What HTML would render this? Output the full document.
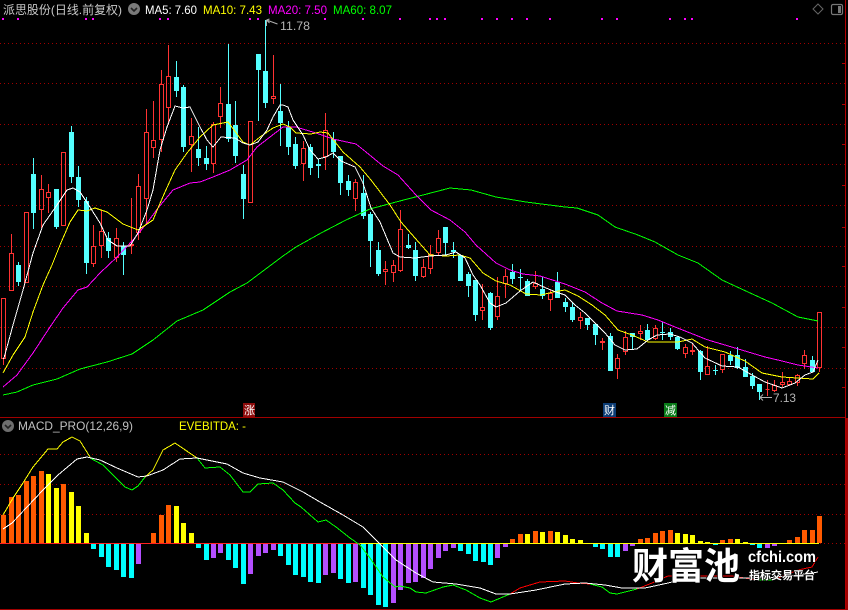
<!DOCTYPE html>
<html><head><meta charset="utf-8"><style>
html,body{margin:0;padding:0;background:#000;width:848px;height:610px;overflow:hidden}
svg{display:block}
text{font-family:"Liberation Sans",sans-serif;font-size:12px}
.cn{font-family:"Liberation Sans","WenQuanYi Zen Hei","Noto Sans CJK SC",sans-serif}
</style></head><body>
<svg width="848" height="610" viewBox="0 0 848 610" xmlns="http://www.w3.org/2000/svg">
<g shape-rendering="crispEdges">
<!-- grid -->
<g stroke="#a00000" stroke-width="1" stroke-dasharray="1 3" fill="none">
<path d="M0 43.5H845M0 83.5H845M0 124.5H845M0 164.5H845M0 205.5H845M0 246.5H845M0 286.5H845M0 327.5H845M0 368.5H845M0 454.5H845M0 484.5H845M0 514.5H845"/>
<path d="M820 543.5H845"/>
</g>
<path d="M0 417.5H846M0 609.5H848" stroke="#a00000" fill="none"/>
<path d="M845.5 0V610" stroke="#b00000" fill="none"/>
<path d="M846 418h2v192h-2z" fill="#a00000"/>
<path d="M842 63.5h3M842 104.5h3M842 144.5h3M842 185.5h3M842 227.5h3M842 266.5h3M842 307.5h3M842 347.5h3M842 387.5h3" stroke="#b00000" fill="none"/>
<!-- magenta dots -->
<path fill="#f0f" d="M2 18h2v2h-2zM17 18h2v2h-2zM85 18h2v2h-2zM92 18h2v2h-2zM159 18h2v2h-2zM167 18h2v2h-2zM249 18h2v2h-2zM257 18h2v2h-2zM324 18h2v2h-2zM362 18h2v2h-2zM399 18h2v2h-2zM429 18h2v2h-2zM436 18h2v2h-2zM444 18h2v2h-2zM481 18h2v2h-2zM496 18h2v2h-2zM511 18h2v2h-2zM526 18h2v2h-2zM549 18h2v2h-2zM601 18h2v2h-2zM616 18h2v2h-2zM669 18h2v2h-2zM684 18h2v2h-2zM691 18h2v2h-2zM796 18h2v2h-2z"/>
<!-- cyan candles -->
<path fill="#54ffff" d="M16 265h5v17h-5zM18 262h1v24h-1zM31 174h5v39h-5zM33 158h1v71h-1zM54 189h5v38h-5zM56 189h1v40h-1zM69 132h5v45h-5zM71 126h1v57h-1zM76 177h5v23h-5zM78 166h1v41h-1zM84 201h5v62h-5zM86 197h1v77h-1zM106 238h5v13h-5zM108 232h1v26h-1zM121 246h5v9h-5zM123 242h1v33h-1zM174 77h5v14h-5zM176 61h1v36h-1zM181 87h5v60h-5zM183 85h1v67h-1zM196 149h5v9h-5zM198 127h1v39h-1zM204 158h5v6h-5zM206 146h1v24h-1zM226 104h5v35h-5zM228 44h1v98h-1zM233 125h5v31h-5zM235 101h1v62h-1zM241 174h5v25h-5zM243 165h1v54h-1zM256 54h5v16h-5zM258 54h1v67h-1zM263 71h5v32h-5zM265 20h1v88h-1zM278 111h5v12h-5zM280 84h1v62h-1zM286 127h5v20h-5zM288 121h1v34h-1zM293 144h5v22h-5zM295 137h1v32h-1zM308 147h5v21h-5zM310 144h1v31h-1zM316 164h5v2h-5zM318 159h1v19h-1zM331 139h5v13h-5zM333 132h1v26h-1zM338 156h5v27h-5zM340 156h1v39h-1zM346 181h5v9h-5zM348 175h1v21h-1zM361 193h5v23h-5zM363 175h1v44h-1zM368 214h5v27h-5zM370 212h1v55h-1zM376 250h5v24h-5zM378 242h1v34h-1zM406 245h5v3h-5zM408 234h1v15h-1zM413 250h5v26h-5zM415 242h1v39h-1zM443 227h5v16h-5zM445 227h1v29h-1zM451 250h5v2h-5zM453 242h1v16h-1zM458 255h5v26h-5zM466 274h5v12h-5zM468 272h1v25h-1zM473 280h5v35h-5zM475 280h1v41h-1zM488 293h5v35h-5zM490 292h1v38h-1zM510 272h5v7h-5zM512 264h1v20h-1zM518 277h5v1h-5zM520 269h1v21h-1zM525 281h5v15h-5zM527 279h1v17h-1zM540 289h5v7h-5zM542 277h1v22h-1zM555 282h5v16h-5zM557 272h1v26h-1zM563 302h5v5h-5zM565 298h1v14h-1zM570 307h5v13h-5zM572 303h1v19h-1zM585 318h5v7h-5zM587 318h1v12h-1zM593 324h5v11h-5zM595 324h1v21h-1zM608 336h5v35h-5zM610 333h1v38h-1zM630 333h5v4h-5zM632 333h1v17h-1zM645 330h5v10h-5zM647 324h1v16h-1zM660 332h5v1h-5zM662 322h1v18h-1zM668 332h5v5h-5zM670 328h1v12h-1zM675 337h5v12h-5zM677 336h1v14h-1zM698 351h5v21h-5zM700 350h1v30h-1zM713 370h5v1h-5zM715 365h1v10h-1zM728 355h5v6h-5zM730 351h1v14h-1zM735 355h5v13h-5zM737 347h1v22h-1zM743 367h5v10h-5zM745 359h1v18h-1zM750 376h5v10h-5zM752 373h1v16h-1zM757 384h5v8h-5zM759 384h1v16h-1zM810 360h5v12h-5zM812 356h1v16h-1z"/>
<!-- red candles -->
<path fill="none" stroke="#ff3232" d="M1.5 298.5h4v60h-4zM3.5 359v6M9.5 253.5h4v37h-4zM11.5 234v19M24.5 212.5h4v70h-4zM39.5 189.5h4v20h-4zM41.5 175v14M41.5 210v18M46.5 192.5h4v5h-4zM48.5 184v8M48.5 198v15M61.5 152.5h4v73h-4zM91.5 246.5h4v17h-4zM93.5 225v21M93.5 264v3M99.5 231.5h4v14h-4zM101.5 210v21M101.5 246v12M114.5 238.5h4v19h-4zM116.5 228v10M116.5 258v4M129.5 244.5h4v1h-4zM131.5 198v46M131.5 246v8M136.5 186.5h4v46h-4zM138.5 174v12M138.5 233v7M144.5 132.5h4v66h-4zM146.5 109v23M146.5 199v26M151.5 140.5h4v7h-4zM153.5 101v39M153.5 148v10M159.5 84.5h4v55h-4zM161.5 70v14M161.5 140v12M166.5 76.5h4v31h-4zM168.5 45v31M168.5 108v17M189.5 136.5h4v8h-4zM191.5 118v18M191.5 145v27M211.5 124.5h4v39h-4zM213.5 122v2M213.5 164v9M218.5 103.5h4v13h-4zM220.5 87v16M220.5 117v11M248.5 121.5h4v81h-4zM271.5 96.5h4v2h-4zM273.5 55v41M273.5 99v5M301.5 148.5h4v15h-4zM303.5 141v7M303.5 164v17M323.5 130.5h4v26h-4zM325.5 113v17M325.5 157v13M353.5 182.5h4v16h-4zM355.5 179v3M355.5 199v12M383.5 269.5h4v2h-4zM385.5 261v8M385.5 272v13M391.5 265.5h4v7h-4zM393.5 260v5M393.5 273v9M398.5 229.5h4v41h-4zM400.5 210v19M400.5 271v1M421.5 267.5h4v9h-4zM423.5 259v8M423.5 277v1M428.5 254.5h4v14h-4zM430.5 245v9M430.5 269v5M436.5 238.5h4v14h-4zM438.5 230v8M438.5 253v2M480.5 307.5h4v3h-4zM482.5 284v23M482.5 311v9M495.5 296.5h4v20h-4zM497.5 277v19M497.5 317v3M503.5 276.5h4v7h-4zM505.5 269v7M505.5 284v14M533.5 283.5h4v3h-4zM535.5 271v12M535.5 287v2M548.5 293.5h4v6h-4zM550.5 290v3M550.5 300v11M578.5 317.5h4v3h-4zM580.5 312v5M580.5 321v8M600.5 341.5h4v1h-4zM602.5 338v3M602.5 343v7M615.5 358.5h4v10h-4zM617.5 354v4M617.5 369v10M623.5 337.5h4v14h-4zM625.5 331v6M625.5 352v3M638.5 331.5h4v2h-4zM640.5 325v6M640.5 334v6M653.5 328.5h4v10h-4zM655.5 325v3M655.5 339v1M683.5 347.5h4v6h-4zM685.5 344v3M685.5 354v4M690.5 350.5h4v1h-4zM692.5 343v7M692.5 352v3M705.5 366.5h4v8h-4zM707.5 346v20M720.5 354.5h4v15h-4zM722.5 370v3M765.5 389.5h4v0h-4zM767.5 380v16M772.5 385.5h4v5h-4zM774.5 380v5M774.5 391v1M780.5 382.5h4v2h-4zM782.5 372v10M782.5 385v2M787.5 381.5h4v3h-4zM789.5 378v3M789.5 385v1M795.5 375.5h4v7h-4zM797.5 374v1M797.5 383v3M802.5 355.5h4v8h-4zM804.5 350v5M804.5 364v5M817.5 312.5h4v55h-4zM819.5 368v4"/>
<!-- MAs -->
<g fill="none" stroke-width="1">
<polyline stroke="#00ff00" points="3,395 17,392 33,385 57,379 80,369 107,362 132,354 153,340 177,321 203,310 230,292 247,283 283,256 296,247 321,233 346,220 370,209 396,202 423,195 450,188 471,190 496,197 526,202 565,207 577,208 598,215 615,227 638,235 655,242 678,255 698,263 722,280 748,292 772,303 798,317 818,321"/>
<polyline stroke="#ff00ff" points="3,387 17,375 33,353 50,327 63,308 78,290 87,287 100,273 117,257 133,240 147,223 158,208 173,190 190,183 200,182 213,177 230,170 247,160 257,147 270,137 283,127 296,127 316,133 333,139 356,144 366,152 383,166 398,175 416,195 431,210 450,220 465,232 476,245 496,263 510,270 523,274 540,276 565,284 585,292 602,303 617,311 642,315 658,320 675,327 708,340 725,345 765,357 782,361 798,365 818,368"/>
<polyline stroke="#ffff00" points="3,373 13,355 25,337 33,312 43,285 52,265 60,245 70,222 78,210 87,211 95,208 107,212 123,224 138,230 153,220 158,208 165,192 175,170 187,153 200,137 213,125 228,122 243,142 250,145 260,137 273,128 283,124 290,127 296,133 311,134 320,132 328,133 343,152 360,167 371,180 390,205 401,222 415,238 430,255 446,256 460,255 470,258 483,273 496,281 510,285 526,294 541,295 553,292 565,290 578,296 592,305 605,315 618,330 632,335 648,342 665,342 678,342 692,339 705,347 725,352 745,361 762,373 782,377 813,379 819,373"/>
<polyline stroke="#ffffff" points="3,359 4,358 13,325 23,290 33,253 43,225 57,205 67,190 73,188 80,192 88,204 100,223 108,240 117,246 130,246 138,233 147,210 153,190 160,150 167,127 175,106 183,108 190,107 200,127 207,140 213,147 221,137 235,138 243,143 250,145 258,142 267,130 273,117 280,105 283,105 288,107 293,120 303,135 310,150 318,159 326,157 333,153 341,161 355,167 363,183 371,208 380,222 393,253 400,257 415,258 430,256 446,255 456,252 465,258 473,275 480,285 490,303 496,307 506,303 520,291 533,282 546,288 556,292 565,295 575,305 585,313 595,323 605,333 615,345 625,350 637,349 648,340 657,335 670,334 680,337 692,343 705,358 722,366 738,367 752,375 765,382 782,388 795,383 805,375 813,372 818,360"/>
</g>
<!-- MACD histogram -->
<path fill="#ff5a00" d="M1 515h5V543h-5zM9 497h5V543h-5zM16 495h5V543h-5zM24 481h5V543h-5zM31 476h5V543h-5zM39 471h5V543h-5zM61 484h5V543h-5zM151 533h5V543h-5zM159 515h5V543h-5zM166 505h5V543h-5zM510 539h5V543h-5zM518 534h5V543h-5zM533 531h5V543h-5zM548 531h5V543h-5zM638 539h5V543h-5zM645 538h5V543h-5zM653 533h5V543h-5zM660 531h5V543h-5zM668 530h5V543h-5zM720 540h5V543h-5zM728 539h5V543h-5zM787 540h5V543h-5zM795 537h5V543h-5zM802 530h5V543h-5zM810 530h5V543h-5zM817 516h5V543h-5z"/>
<path fill="#ffff00" d="M46 474h5V543h-5zM54 488h5V543h-5zM69 492h5V543h-5zM76 506h5V543h-5zM84 533h5V543h-5zM174 506h5V543h-5zM181 523h5V543h-5zM189 533h5V543h-5zM525 534h5V543h-5zM540 532h5V543h-5zM555 532h5V543h-5zM563 535h5V543h-5zM570 539h5V543h-5zM578 540h5V543h-5zM675 533h5V543h-5zM683 534h5V543h-5zM690 535h5V543h-5zM698 541h5V543h-5zM705 542h5V543h-5zM735 539h5V543h-5zM743 542h5V543h-5z"/>
<path fill="#00ffff" d="M91 544h5v5h-5zM99 544h5v13h-5zM106 544h5v23h-5zM114 544h5v26h-5zM121 544h5v33h-5zM129 544h5v34h-5zM196 544h5v4h-5zM204 544h5v16h-5zM226 544h5v16h-5zM233 544h5v24h-5zM241 544h5v40h-5zM278 544h5v12h-5zM286 544h5v21h-5zM293 544h5v31h-5zM301 544h5v33h-5zM308 544h5v38h-5zM316 544h5v39h-5zM338 544h5v35h-5zM346 544h5v39h-5zM361 544h5v44h-5zM368 544h5v51h-5zM376 544h5v61h-5zM383 544h5v63h-5zM458 544h5v7h-5zM466 544h5v10h-5zM473 544h5v17h-5zM481 544h5v18h-5zM488 544h5v21h-5zM593 544h5v3h-5zM600 544h5v5h-5zM608 544h5v13h-5zM615 544h5v13h-5zM713 544h5v1h-5zM750 544h5v1h-5zM757 544h5v4h-5z"/>
<path fill="#b44fff" d="M136 544h5v20h-5zM211 544h5v14h-5zM218 544h5v9h-5zM248 544h5v30h-5zM256 544h5v12h-5zM263 544h5v9h-5zM271 544h5v6h-5zM323 544h5v31h-5zM331 544h5v29h-5zM353 544h5v38h-5zM391 544h5v59h-5zM398 544h5v46h-5zM406 544h5v39h-5zM413 544h5v38h-5zM421 544h5v34h-5zM428 544h5v25h-5zM436 544h5v14h-5zM443 544h5v7h-5zM451 544h5v4h-5zM495 544h5v14h-5zM503 544h5v3h-5zM623 544h5v7h-5zM630 544h5v2h-5zM765 544h5v4h-5zM772 544h5v2h-5z"/>
<path d="M0 543.5H360" stroke="#ff2020" fill="none"/>
<path d="M360 543.5H819" stroke="#ffff00" fill="none"/>
<!-- MACD lines -->
<g fill="none">
<polyline stroke="#ffff00" points="3,515 13,498 23,483 33,467 48,449 57,449 63,442 72,437 80,441 90,457"/>
<polyline stroke="#00ff00" points="90,458 103,465 113,475 125,487 132,490 138,486 145,477"/>
<polyline stroke="#ffff00" points="145,477 153,470 163,450 175,443 197,458"/>
<polyline stroke="#00ff00" points="197,458 205,468 220,467 230,475 243,492 250,492 258,484 273,483 283,490 295,503 301,507 318,522 326,520 336,527 350,538 360,545 370,558 383,577 395,587 400,586 410,588 416,592 426,593 443,587 453,585 466,590 480,598 491,602 510,594"/>
<polyline stroke="#ff0000" points="510,594 520,588 540,582 565,581 578,583 590,584"/>
<polyline stroke="#00ff00" points="590,584 602,587 610,593 617,594 637,589"/>
<polyline stroke="#ff0000" points="637,589 652,583 668,576 732,576 757,580"/>
<polyline stroke="#00ff00" points="757,580 772,580 778,578"/>
<polyline stroke="#ff0000" points="778,578 798,570 812,567 818,557"/>
<polyline stroke="#ffffff" points="3,529 12,523 27,507 43,490 58,475 77,459 87,457 100,460 117,468 138,477 147,476 163,470 180,459 197,458 227,464 243,473 260,478 283,482 303,492 320,502 343,515 363,527 378,542 396,560 416,573 433,582 456,584 480,588 496,594 510,594 536,590 565,584 585,583 605,585 622,588 645,588 668,583 688,578 725,578 765,578 798,575 818,572"/>
</g>
</g>
<!-- label tags -->
<rect x="243" y="403" width="12" height="14" fill="#8c0c0c"/>
<text x="244" y="414" class="cn" style="font-size:11px" fill="#fff" textLength="11" lengthAdjust="spacingAndGlyphs">涨</text>
<rect x="603" y="403" width="13" height="14" fill="#0c3c74"/>
<text x="604" y="414" class="cn" style="font-size:11px" fill="#fff" textLength="11" lengthAdjust="spacingAndGlyphs">财</text>
<rect x="664" y="403" width="13" height="14" fill="#087a18"/>
<text x="665" y="414" class="cn" style="font-size:11px" fill="#fff" textLength="11" lengthAdjust="spacingAndGlyphs">减</text>
<!-- header -->
<text x="3" y="14" class="cn" fill="#c8c8c8" textLength="119" lengthAdjust="spacingAndGlyphs">派思股份(日线.前复权)</text>
<circle cx="134" cy="9" r="6" fill="#7a7a7a"/>
<path d="M131 8l3 3 3-3" fill="none" stroke="#222" stroke-width="1.6"/>
<text x="145" y="14" fill="#ffffff" textLength="52" lengthAdjust="spacingAndGlyphs">MA5: 7.60</text>
<text x="203" y="14" fill="#ffff00" textLength="59" lengthAdjust="spacingAndGlyphs">MA10: 7.43</text>
<text x="268" y="14" fill="#ff00ff" textLength="59" lengthAdjust="spacingAndGlyphs">MA20: 7.50</text>
<text x="333" y="14" fill="#00ff00" textLength="59" lengthAdjust="spacingAndGlyphs">MA60: 8.07</text>
<!-- top-right icons -->
<path d="M818 4l5 5-5 5-5-5z" fill="none" stroke="#666" stroke-width="1"/>
<rect x="831.5" y="4.5" width="11" height="10" rx="1.5" fill="#000" stroke="#777" stroke-width="1.2"/>
<rect x="838" y="6" width="3" height="7" fill="#777"/>
<!-- high/low marks -->
<path d="M266.5 20v6M266.5 20l3-1M266.5 20l3 3M266.5 20l11 4" fill="none" stroke="#b0b0b0" stroke-width="1"/>
<text x="280" y="30" fill="#b4b4b4" textLength="30" lengthAdjust="spacingAndGlyphs">11.78</text>
<path d="M760 397.5h12M760 397.5l3-3M760 397.5l3 3" fill="none" stroke="#b0b0b0" stroke-width="1"/>
<text x="773" y="402" fill="#b4b4b4" textLength="23" lengthAdjust="spacingAndGlyphs">7.13</text>
<!-- MACD header -->
<circle cx="8" cy="426" r="6" fill="#6e6e6e"/>
<path d="M5 425l3 3 3-3" fill="none" stroke="#222" stroke-width="1.6"/>
<text x="18" y="430" fill="#c0c0c0" textLength="115" lengthAdjust="spacingAndGlyphs">MACD_PRO(12,26,9)</text>
<text x="179" y="430" fill="#ffff00" textLength="67" lengthAdjust="spacingAndGlyphs">EVEBITDA: -</text>
<!-- watermark -->
<text x="632" y="579" class="cn" style="font-family:'Noto Sans CJK SC','WenQuanYi Zen Hei',sans-serif;font-size:37px;font-weight:700;paint-order:stroke" fill="#fff" stroke="#000" stroke-width="1.5" textLength="108" lengthAdjust="spacingAndGlyphs">财富池</text>
<text x="748" y="562" style="font-size:16px;font-weight:700;paint-order:stroke" fill="#fff" stroke="#000" stroke-width="1" textLength="68" lengthAdjust="spacingAndGlyphs">cfchi.com</text>
<text x="749" y="579" class="cn" style="font-family:'Noto Sans CJK SC','WenQuanYi Zen Hei',sans-serif;font-size:11px;font-weight:700;paint-order:stroke" fill="#fff" stroke="#000" stroke-width="1" textLength="66" lengthAdjust="spacingAndGlyphs">指标交易平台</text>
</svg>
</body></html>
